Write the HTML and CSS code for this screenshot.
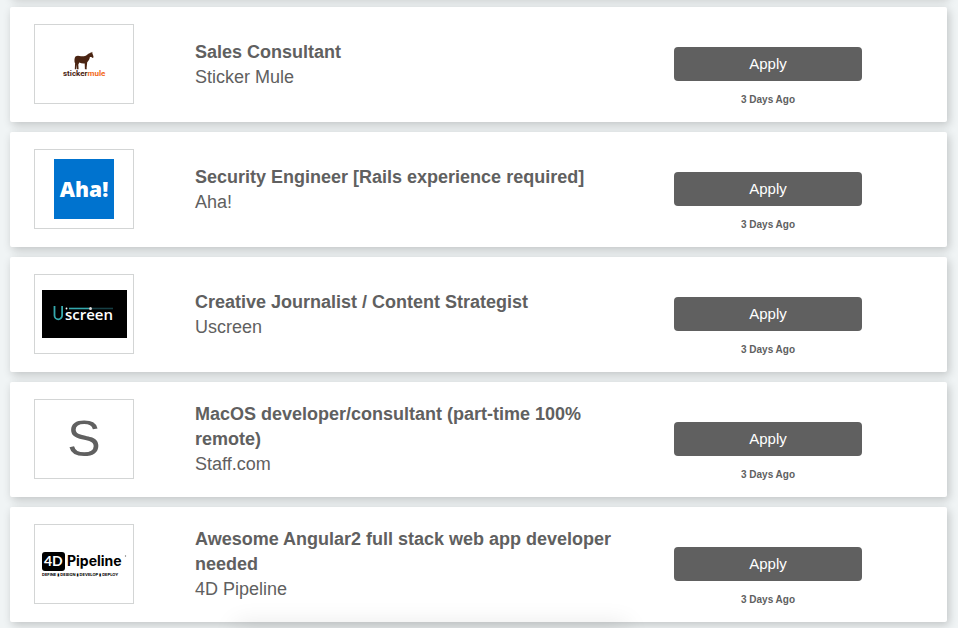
FILE: index.html
```
<!DOCTYPE html>
<html lang="en">
<head>
  <meta charset="UTF-8">
  <title>Jobs</title>
  <meta name="viewport" content="width=device-width, initial-scale=1.0">
  <link rel="stylesheet" href="styles.css">
</head>
<body>
  <ul class="jobs">
    <li class="job">
      <div class="logo">
        <svg viewBox="0 0 98 78" role="img" aria-label="Sticker Mule">
          <path fill="#4a2412" d="M40.500 31.500C42 30.200 44 30.600 46 31.200C48 31.500 50 31.500 51.500 30.300C52.800 29 54 28.200 55.500 28L56 26.800L56.600 27.800L57.300 26.800L57.400 28.600C58 29.800 58.300 31 58.600 32.300L57.600 33L56.300 31.900L54.900 32C54.600 34 53.800 35.800 52.200 37.200L51.600 43.200L51.900 44.200H49.900L49.700 38.400C47.800 38.700 46 38.300 44.300 37.600L43.300 39.600L43.600 44.200H41.900L41.600 39.600L41.200 44.200H39.800L40.100 38L39.600 37.500C39.400 35.500 39.300 33 40.500 31.500z"/>
          <text class="mule-text" x="28" y="51" fill="#4a2412">sticker<tspan fill="#f26b21">mule</tspan></text>
        </svg>
      </div>
      <div class="info">
        <h2>Sales Consultant</h2>
        <p>Sticker Mule</p>
      </div>
      <div class="action">
        <button type="button">Apply</button>
        <small>3 Days Ago</small>
      </div>
    </li>

    <li class="job">
      <div class="logo">
        <svg viewBox="0 0 98 78" role="img" aria-label="Aha!">
          <rect x="19" y="9" width="60" height="60" fill="#0073cf"/>
          <text class="aha-text" x="49" y="47" fill="#fff">Aha!</text>
        </svg>
      </div>
      <div class="info">
        <h2>Security Engineer [Rails experience required]</h2>
        <p>Aha!</p>
      </div>
      <div class="action">
        <button type="button">Apply</button>
        <small>3 Days Ago</small>
      </div>
    </li>

    <li class="job">
      <div class="logo">
        <svg viewBox="0 0 98 78" role="img" aria-label="Uscreen">
          <rect x="7" y="15" width="85" height="48" fill="#000"/>
          <path d="M19.500 31v9.500a3.800 3.800 0 0 0 7.600 0V31" fill="none" stroke="#35a9ad" stroke-width="1.800"/>
          <path d="M34 33.500h20" stroke="#35a9ad" stroke-width="1.600"/>
          <path d="M57 33.500h21" stroke="#173f44" stroke-width="1.600"/>
          <circle cx="31.500" cy="33.500" r="0.900" fill="#fff"/>
          <circle cx="55.500" cy="33.500" r="1.500" fill="#ddd"/>
          <text class="uscreen-text" x="30" y="45" fill="#fff">screen</text>
        </svg>
      </div>
      <div class="info">
        <h2>Creative Journalist / Content Strategist</h2>
        <p>Uscreen</p>
      </div>
      <div class="action">
        <button type="button">Apply</button>
        <small>3 Days Ago</small>
      </div>
    </li>

    <li class="job">
      <div class="logo">
        <span class="letter">S</span>
      </div>
      <div class="info">
        <h2>MacOS developer/consultant (part-time 100% remote)</h2>
        <p>Staff.com</p>
      </div>
      <div class="action">
        <button type="button">Apply</button>
        <small>3 Days Ago</small>
      </div>
    </li>

    <li class="job">
      <div class="logo">
        <svg viewBox="0 0 98 78" role="img" aria-label="4D Pipeline">
          <rect x="7" y="27" width="23" height="19" rx="3" fill="#000"/>
          <text class="pipe-mark" x="9" y="41" fill="#fff">4D</text>
          <text class="pipe-text" x="32" y="41">Pipeline</text>
          <circle cx="90.500" cy="31" r="0.700" fill="#777"/>
          <text class="pipe-tag" x="7" y="51">DEFINE ▮ DESIGN ▮ DEVELOP ▮ DEPLOY</text>
        </svg>
      </div>
      <div class="info">
        <h2>Awesome Angular2 full stack web app developer needed</h2>
        <p>4D Pipeline</p>
      </div>
      <div class="action">
        <button type="button">Apply</button>
        <small>3 Days Ago</small>
      </div>
    </li>
  </ul>
</body>
</html>
```

FILE: styles.css
```
* {
  box-sizing: border-box;
}
body {
  margin: 0;
  background: #f0f4f5;
  color: #606060;
  font-family: "Liberation Sans", Arial, sans-serif;
  overflow: hidden;
}
/* soft shade along the bottom edge of the window */
body::after {
  content: "";
  position: fixed;
  left: 25%;
  right: 35%;
  bottom: -12px;
  height: 12px;
  box-shadow: 0 0 24px 4px rgba(0, 0, 0, 0.1);
  pointer-events: none;
}
.jobs {
  display: flex;
  flex-direction: column;
  gap: 10px;
  margin: -13px 0 0;
  padding: 0 11px 10px 10px;
  list-style: none;
}
.jobs::before {
  content: "";
  height: 10px;
  box-shadow: 2px 3px 10px rgba(0, 0, 0, 0.2);
}
.job {
  display: grid;
  grid-template-columns: 161fr 479fr 188fr;
  align-items: center;
  min-height: 115px;
  padding: 14px 85px 14px 24px;
  background: #fff;
  border-radius: 2px;
  box-shadow: 2px 3px 10px rgba(0, 0, 0, 0.2);
}
.logo {
  display: flex;
  align-items: center;
  justify-content: center;
  width: 100px;
  height: 80px;
  margin-bottom: 1px;
  border: 1px solid #d3d5d5;
}
.logo svg {
  width: 98px;
  height: 78px;
}
.letter {
  font-size: 50px;
  line-height: 1;
}
.info {
  padding-right: 36px;
}
.info h2,
.info p {
  margin: 0;
  font-size: 18px;
  line-height: 25px;
}
.action {
  display: flex;
  flex-direction: column;
  align-items: center;
  gap: 11px;
  padding-top: 25px;
}
.action button {
  width: 100%;
  height: 34px;
  padding: 0;
  border: 0;
  border-radius: 4px;
  background: #606060;
  color: #fff;
  font-family: inherit;
  font-size: 15px;
  cursor: pointer;
}
.action button:hover {
  background: #4d4d4d;
}
.action small {
  font-size: 10px;
  font-weight: bold;
  line-height: 16px;
}

/* logo lettering */
.mule-text {
  font: bold 8px Roboto, sans-serif;
}
.aha-text {
  font: 800 21px "Open Sans", sans-serif;
  text-anchor: middle;
}
.uscreen-text {
  font: 600 15px "Open Sans", sans-serif;
}
.pipe-mark {
  font: bold 14px Lato, sans-serif;
}
.pipe-text {
  font: bold 14px Inter, sans-serif;
}
.pipe-tag {
  font: bold 4px Inter, "DejaVu Sans", sans-serif;
}
```
